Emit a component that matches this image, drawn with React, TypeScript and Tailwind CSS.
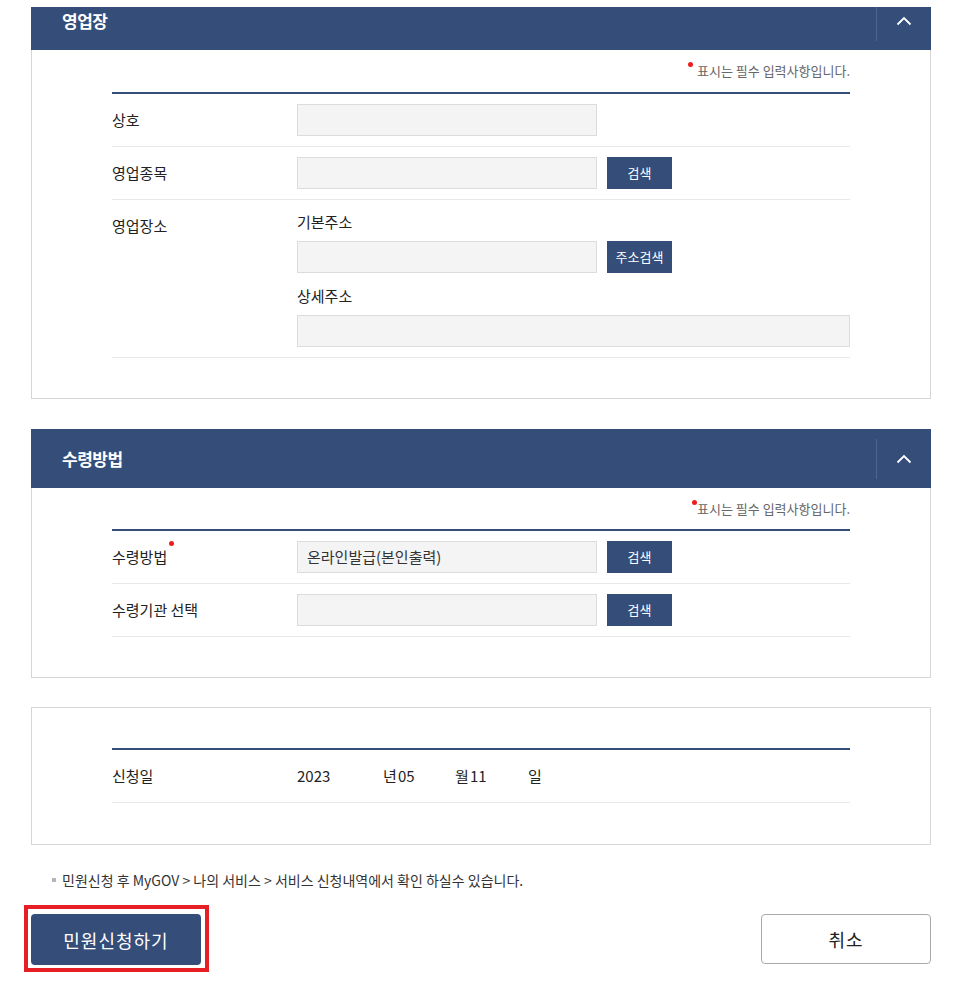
import React from "react";

const NAVY = "bg-[#354d79]";

function Chevron() {
  return (
    <svg width="16" height="10" viewBox="0 0 16 10" fill="none">
      <path d="M1.5 8.5 L8 2 L14.5 8.5" stroke="#ffffff" strokeWidth="1.8" />
    </svg>
  );
}

function Header({ title }: { title: string }) {
  return (
    <div className={`flex h-[59px] items-center ${NAVY}`}>
      <h2 className="flex-1 pl-[31px] text-[17px] font-bold leading-none tracking-[-0.5px] text-white">
        {title}
      </h2>
      <div className="flex h-[40px] w-[55px] items-center justify-center border-l border-[#4d6592]">
        <Chevron />
      </div>
    </div>
  );
}

function RequiredNote({ gap }: { gap: boolean }) {
  return (
    <div className="flex h-[18px] items-center justify-end text-[13px] leading-none text-[#666]">
      <span className={`mb-[12px] h-[5px] w-[5px] rounded-full bg-[#ee1c1c] ${gap ? "mr-[4px]" : "mr-0"}`} />
      표시는 필수 입력사항입니다.
    </div>
  );
}

function Field({ value, wide }: { value?: string; wide?: boolean }) {
  return (
    <div
      className={`flex h-[32px] items-center border border-[#dcdcdc] bg-[#f4f4f4] pl-[9px] text-[15px] text-[#333] ${
        wide ? "w-full" : "w-[300px]"
      }`}
    >
      {value}
    </div>
  );
}

function SearchButton({ label }: { label: string }) {
  return (
    <button className={`ml-[10px] h-[32px] w-[65px] text-[13px] text-white ${NAVY}`}>{label}</button>
  );
}

function Row({ label, children, top, required }: { label: string; children: React.ReactNode; top?: boolean; required?: boolean }) {
  return (
    <div className={`flex border-b border-[#e8e8e8] ${top ? "items-start" : "items-center"}`}>
      <div className={`relative w-[185px] text-[15px] text-[#222] ${top ? "pt-[15px]" : ""}`}>
        <span className="relative">
          {label}
          {required && <span className="absolute -right-[7px] -top-[5px] h-[5px] w-[5px] rounded-full bg-[#ee1c1c]" />}
        </span>
      </div>
      <div className="flex-1">{children}</div>
    </div>
  );
}

export default function App() {
  return (
    <div className="min-h-[983px] w-[967px] bg-white pt-[7px] font-['Noto_Sans_CJK_KR','Malgun_Gothic',sans-serif] leading-[22px]">
      {/* 영업장 */}
      <section className="ml-[31px] w-[900px]">
        <div className="h-[43px] overflow-hidden">
          <div className="-mt-[16px]">
            <Header title="영업장" />
          </div>
        </div>
        <div className="border border-t-0 border-[#d6d6d6] px-[80px] pb-[40px] pt-[11px]">
          <RequiredNote gap />
          <div className="mt-[13px] border-t-2 border-[#354d79]">
            <Row label="상호">
              <div className="py-[10px]">
                <Field />
              </div>
            </Row>
            <Row label="영업종목">
              <div className="flex py-[10px]">
                <Field />
                <SearchButton label="검색" />
              </div>
            </Row>
            <Row label="영업장소" top>
              <div className="pb-[10px] pt-[11px]">
                <p className="text-[15px] text-[#222]">기본주소</p>
                <div className="mt-[8px] flex">
                  <Field />
                  <SearchButton label="주소검색" />
                </div>
                <p className="mt-[12px] text-[15px] text-[#222]">상세주소</p>
                <div className="mt-[8px]">
                  <Field wide />
                </div>
              </div>
            </Row>
          </div>
        </div>
      </section>

      {/* 수령방법 */}
      <section className="ml-[31px] mt-[30px] w-[900px]">
        <Header title="수령방법" />
        <div className="border border-t-0 border-[#d6d6d6] px-[80px] pb-[40px] pt-[11px]">
          <RequiredNote gap={false} />
          <div className="mt-[12px] border-t-2 border-[#354d79]">
            <Row label="수령방법" required>
              <div className="flex py-[10px]">
                <Field value="온라인발급(본인출력)" />
                <SearchButton label="검색" />
              </div>
            </Row>
            <Row label="수령기관 선택">
              <div className="flex py-[10px]">
                <Field />
                <SearchButton label="검색" />
              </div>
            </Row>
          </div>
        </div>
      </section>

      {/* 신청일 */}
      <section className="ml-[31px] mt-[29px] w-[900px] border border-[#d6d6d6] px-[80px] pb-[41px] pt-[40px]">
        <div className="border-t-2 border-[#354d79]">
          <Row label="신청일">
            <div className="flex h-[52px] items-center text-[15px] text-[#222]">
              <span className="w-[86px]">2023</span>
              <span className="w-[15px]">년</span>
              <span className="w-[57px]">05</span>
              <span className="w-[15px]">월</span>
              <span className="w-[58px]">11</span>
              <span>일</span>
            </div>
          </Row>
        </div>
      </section>

      <p className="ml-[31px] mt-[25px] flex w-[900px] items-center pl-[21px] text-[14px] leading-[20px] text-[#333]">
        <span className="mr-[6px] h-[4px] w-[4px] bg-[#b5b5b5]" />
        민원신청 후 MyGOV &gt; 나의 서비스 &gt; 서비스 신청내역에서 확인 하실수 있습니다.
      </p>

      <div className="ml-[31px] mt-[24px] flex w-[900px] items-start justify-between">
        <button className={`relative h-[51px] w-[170px] rounded-[4px] text-[18px] tracking-[1px] text-white ${NAVY}`}>
          민원신청하기
          <span className="pointer-events-none absolute -bottom-[7px] -left-[7px] -right-[8px] -top-[9px] border-4 border-[#e61f26]" />
        </button>
        <button className="h-[50px] w-[170px] rounded-[4px] border border-[#aaa] bg-white text-[18px] tracking-[1px] text-[#222]">
          취소
        </button>
      </div>
    </div>
  );
}
